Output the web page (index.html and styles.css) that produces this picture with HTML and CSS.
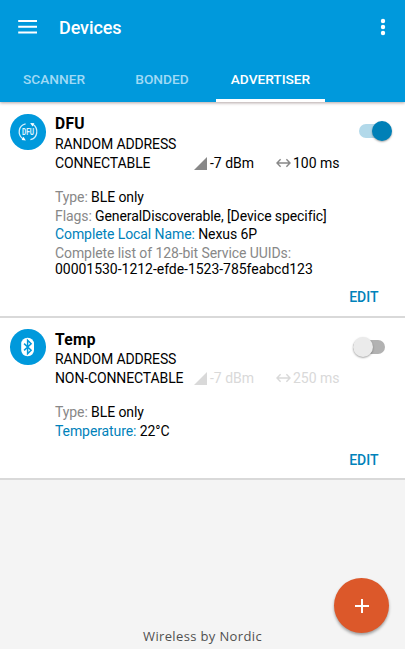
FILE: index.html
```
<!DOCTYPE html>
<html lang="en">
<head>
<meta charset="utf-8">
<title>Devices</title>
<link rel="stylesheet" href="styles.css">
</head>
<body>
<div class="app">
  <header class="header">
    <div class="toolbar">
      <svg class="menu" width="20" height="14" viewBox="0 0 20 14"><path d="M0.2 1h18.8M0.2 6.8h18.8M0.2 12.4h18.8" stroke="#fff" stroke-width="2"/></svg>
      <h1 class="title">Devices</h1>
      <svg class="more" width="6" height="18" viewBox="0 0 6 18" fill="#fff"><circle cx="3" cy="3" r="2.2"/><circle cx="3" cy="9" r="2.2"/><circle cx="3" cy="15" r="2.2"/></svg>
    </div>
    <nav class="tabs">
      <a class="tab">SCANNER</a>
      <a class="tab">BONDED</a>
      <a class="tab active">ADVERTISER</a>
    </nav>
  </header>
  <main class="list">
    <section class="card first">
      <div class="avatar">
        <svg width="36" height="36" viewBox="0 0 36 36">
          <g fill="none" stroke="#d6effc" stroke-width="1.3"><path d="M15.6 9.8C8.2 11.4 7.2 20.6 12.8 24.8"/><path d="M20.4 25.6C27.8 24 28.8 14.8 23.2 10.6"/></g>
          <path d="M11.6 26.1l4.2.3-2.3-3.6zM24.4 9.3l-4.2-.3 2.3 3.6z" fill="#fff"/>
          <text class="dfu" x="18" y="21.2" text-anchor="middle" textLength="12" lengthAdjust="spacingAndGlyphs">DFU</text>
        </svg>
      </div>
      <div class="content">
        <div class="top"><h2 class="name">DFU</h2><span class="switch on"><i class="thumb"></i></span></div>
        <p class="line">RANDOM ADDRESS</p>
        <div class="line stats">
          <span class="mode">CONNECTABLE</span>
          <span class="power"><svg width="14" height="13" viewBox="0 0 14 13"><path d="M0 13L13 0v13z" fill="currentColor"/></svg><b>-7 dBm</b></span>
          <span class="interval"><svg width="15" height="10" viewBox="0 0 15 10"><path d="M1.2 5h12.6M4.6 1.2L1 5l3.6 3.8M10.4 1.2L14 5l-3.6 3.8" fill="none" stroke="currentColor" stroke-width="1.4"/></svg><b>100 ms</b></span>
        </div>
        <div class="details">
          <p class="line"><span class="label">Type:</span> BLE only</p>
          <p class="line flags"><span class="label">Flags:</span> GeneralDiscoverable, [Device specific]</p>
          <p class="line local"><span class="label link">Complete Local Name:</span> Nexus 6P</p>
          <p class="line services"><span class="label">Complete list of 128-bit Service UUIDs:</span></p>
          <p class="line uuid">00001530-1212-efde-1523-785feabcd123</p>
        </div>
        <a class="edit">EDIT</a>
      </div>
    </section>
    <section class="card second">
      <div class="avatar">
        <svg width="36" height="36" viewBox="0 0 36 36">
          <rect x="11.2" y="8.8" width="12.8" height="18.4" rx="6.2" fill="#fff"/>
          <path d="M14.1 14.6l7 6.7-3.5 3.4V11.3l3.5 3.4-7 6.7" fill="none" stroke="#0099dc" stroke-width="1.5"/>
        </svg>
      </div>
      <div class="content">
        <div class="top"><h2 class="name">Temp</h2><span class="switch"><i class="thumb"></i></span></div>
        <p class="line">RANDOM ADDRESS</p>
        <div class="line stats off">
          <span class="mode">NON-CONNECTABLE</span>
          <span class="power"><svg width="14" height="13" viewBox="0 0 14 13"><path d="M0 13L13 0v13z" fill="currentColor"/></svg><b>-7 dBm</b></span>
          <span class="interval"><svg width="15" height="10" viewBox="0 0 15 10"><path d="M1.2 5h12.6M4.6 1.2L1 5l3.6 3.8M10.4 1.2L14 5l-3.6 3.8" fill="none" stroke="currentColor" stroke-width="1.4"/></svg><b>250 ms</b></span>
        </div>
        <div class="details">
          <p class="line"><span class="label">Type:</span> BLE only</p>
          <p class="line temperature"><span class="label link">Temperature:</span> 22°C</p>
        </div>
        <a class="edit">EDIT</a>
      </div>
    </section>
  </main>
  <footer class="footer">Wireless by Nordic</footer>
  <button class="fab" aria-label="Add"><svg width="14" height="14" viewBox="0 0 14 14"><path d="M0 7h14M7 0v14" stroke="#fff" stroke-width="2"/></svg></button>
</div>
</body>
</html>
```
FILE: styles.css
```
* { box-sizing: border-box; margin: 0; padding: 0; }
body { font-family: Roboto, "Liberation Sans", sans-serif; background: #f4f4f4; color: #000; }
svg { display: block; flex: none; }
.app { position: relative; height: 649px; display: flex; flex-direction: column; overflow: hidden; }
.header { position: relative; height: 102px; background: #0099dc; color: #fff; box-shadow: 0 1px 3px rgba(60, 30, 30, .4); flex: none; }
.toolbar { height: 56px; display: flex; align-items: center; padding: 0 19px 0 18px; }
.menu { margin-top: -3px; }
.title { font-size: 18px; font-weight: 500; margin-left: 21px; line-height: 24px; letter-spacing: -.1px; }
.more { margin: -2px 0 0 auto; }
.tabs { display: flex; height: 46px; }
.tab { width: 108px; line-height: 47px; text-align: center; font-size: 13.7px; font-weight: 500; color: #a0daf5; }
.tab.active { width: 109px; color: #fff; border-bottom: 3px solid #fff; }
.card { display: flex; background: #fff; padding-left: 10px; border-bottom: 2px solid #d9d9d9; }
.first { height: 216px; padding-top: 12px; }
.second { height: 162px; padding-top: 11px; }
.avatar { width: 35.5px; height: 35.5px; border-radius: 50%; background: #0099dc; flex: none; }
.dfu { font: 700 9.5px Roboto, sans-serif; fill: #e4f5fd; }
.content { flex: 1; margin-left: 9.5px; display: flex; flex-direction: column; }
.top { display: flex; justify-content: space-between; height: 21px; }
.name { font-size: 15.6px; font-weight: 700; line-height: 21px; letter-spacing: .25px; }
.second .name { line-height: 22px; }
.line { font-size: 14px; line-height: 19px; height: 19px; white-space: nowrap; letter-spacing: -.12px; }
.stats { display: flex; align-items: center; height: 18px; line-height: 18px; }
.stats b { font-weight: 400; letter-spacing: 0; }
.mode { width: 139px; }
.power, .interval { display: flex; align-items: center; color: #888; }
.power { width: 82px; }
.power b { margin-left: 2px; }
.interval b { margin-left: 2px; }
.stats b { color: #000; }
.off .power, .off .interval, .off b { color: #d9d9d9; }
.details { padding-top: 16px; }
.label { color: #888; }
.link { color: #0082ba; }
.details .line { letter-spacing: -.09px; }
.details .flags { height: 18px; line-height: 18px; }
.details .temperature { height: 18px; }
.details .services { height: 17px; line-height: 18px; }
.details .uuid { line-height: 16px; height: 17px; letter-spacing: -.03px; }
.edit { margin: auto 26.5px 11px auto; color: #0082ba; font-size: 14px; line-height: 16px; font-weight: 500; }
.second .edit { margin-bottom: 10px; }
.switch { position: relative; width: 32px; height: 14px; border-radius: 7px; background: #b2b2b2; margin: 11px 20.5px 0 0; }
.thumb { position: absolute; width: 20px; height: 20px; left: 0; top: -3px; border-radius: 50%; background: #ebebeb; box-shadow: 0 1px 2px rgba(0, 0, 0, .35); }
.switch.on { background: #b2d9ea; margin: 10px 14px 0 0; }
.on .thumb { left: 13px; background: #0080b7; }
.footer { margin-top: auto; height: 26px; text-align: center; font: 13px/26px "Open Sans", sans-serif; letter-spacing: .36px; color: #505050; }
.fab { position: absolute; right: 16px; bottom: 16px; width: 55px; height: 55px; border: 0; border-radius: 50%; background: #dc582a; display: grid; place-items: center; box-shadow: 0 2px 3px rgba(0, 0, 0, .35); }
```
